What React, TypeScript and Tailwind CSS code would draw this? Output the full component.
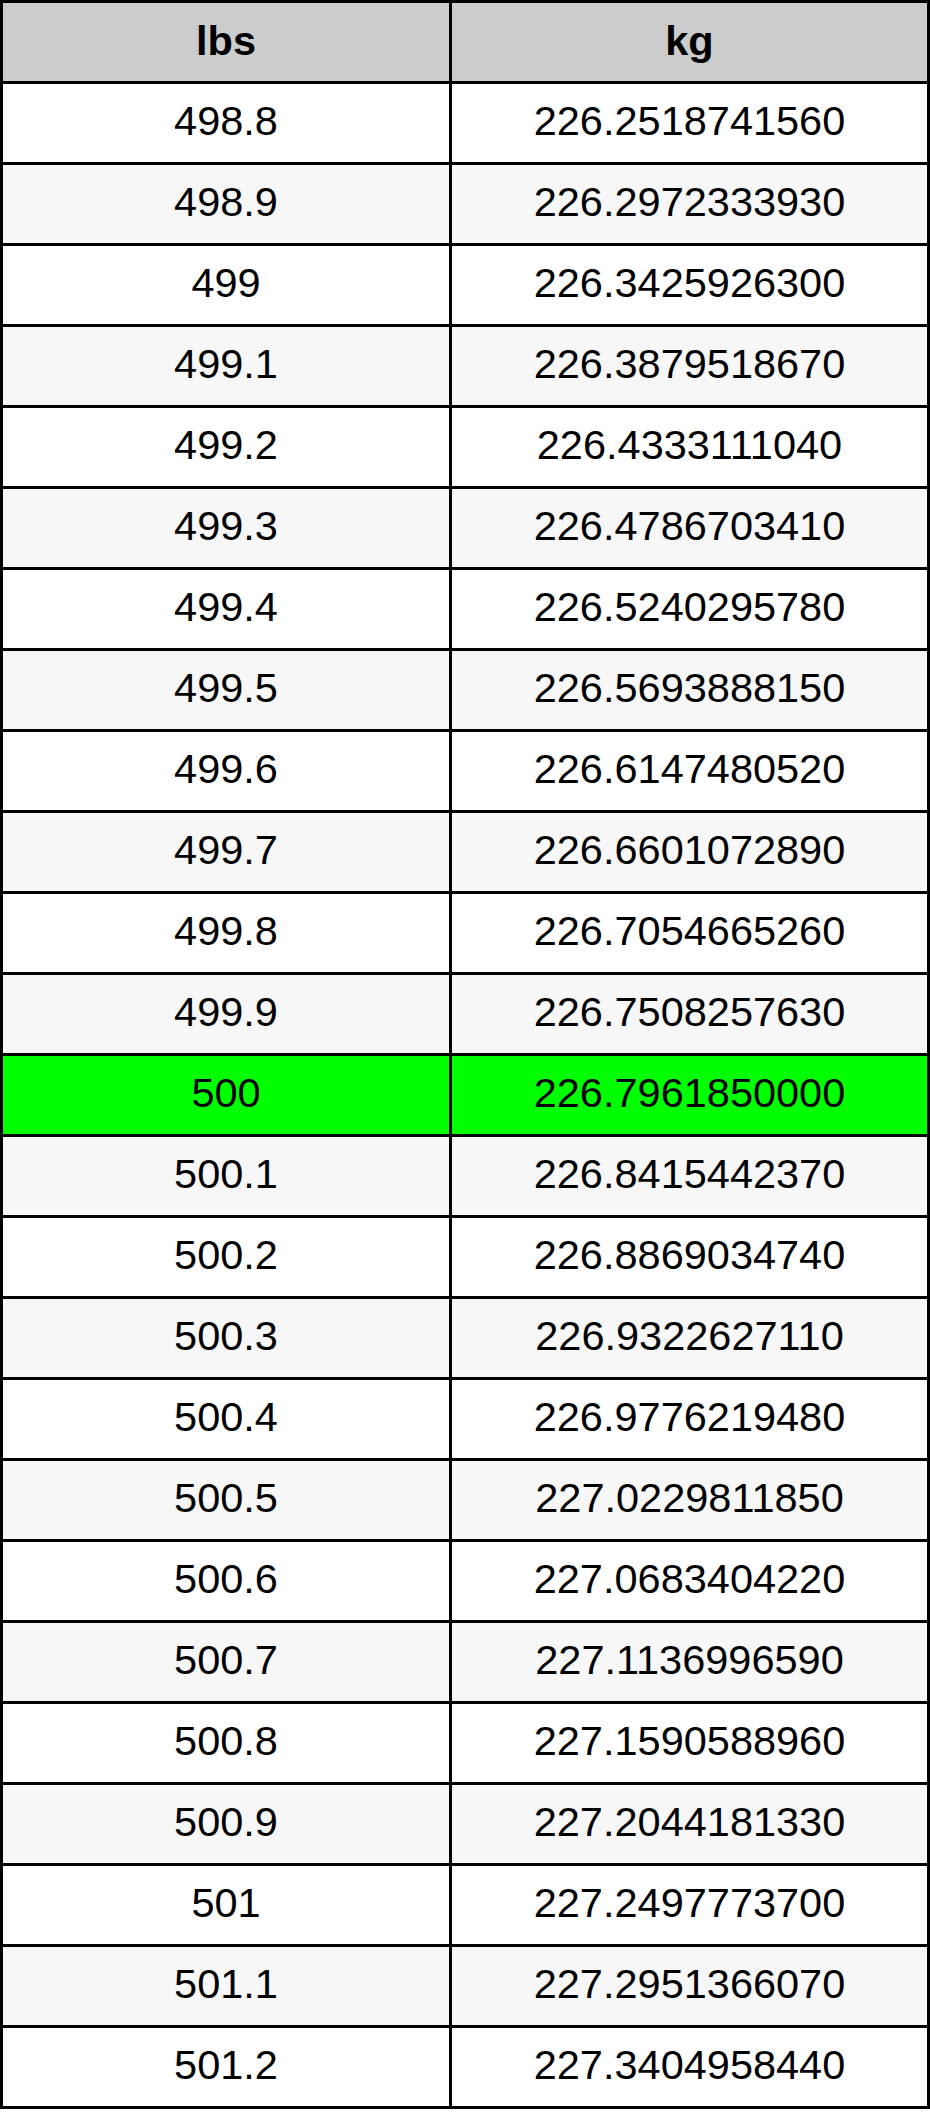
import React from "react";

const rows: [string, string][] = [
  ["498.8", "226.2518741560"],
  ["498.9", "226.2972333930"],
  ["499", "226.3425926300"],
  ["499.1", "226.3879518670"],
  ["499.2", "226.4333111040"],
  ["499.3", "226.4786703410"],
  ["499.4", "226.5240295780"],
  ["499.5", "226.5693888150"],
  ["499.6", "226.6147480520"],
  ["499.7", "226.6601072890"],
  ["499.8", "226.7054665260"],
  ["499.9", "226.7508257630"],
  ["500", "226.7961850000"],
  ["500.1", "226.8415442370"],
  ["500.2", "226.8869034740"],
  ["500.3", "226.9322627110"],
  ["500.4", "226.9776219480"],
  ["500.5", "227.0229811850"],
  ["500.6", "227.0683404220"],
  ["500.7", "227.1136996590"],
  ["500.8", "227.1590588960"],
  ["500.9", "227.2044181330"],
  ["501", "227.2497773700"],
  ["501.1", "227.2951366070"],
  ["501.2", "227.3404958440"],
];

export default function App() {
  return (
    <div className="bg-white w-[930px]" style={{ fontFamily: '"Liberation Sans", Arial, sans-serif' }}>
      <table className="w-[930px] table-fixed border-separate border-spacing-[3px] bg-black text-black text-[41.5px] leading-[1.15]">
        <colgroup>
          <col className="w-[446px]" />
          <col className="w-[475px]" />
        </colgroup>
        <thead>
          <tr>
            <th className="h-[78px] p-0 pb-[3px] bg-[#cccccc] text-center align-middle font-bold">lbs</th>
            <th className="h-[78px] p-0 pb-[3px] bg-[#cccccc] text-center align-middle font-bold">kg</th>
          </tr>
        </thead>
        <tbody>
          {rows.map(([lbs, kg], i) => {
            const bg = lbs === "500" ? "bg-[#00ff00]" : i % 2 === 1 ? "bg-[#f7f7f7]" : "bg-white";
            return (
              <tr key={lbs}>
                <td className={`h-[78px] p-0 pb-[4px] text-center align-middle font-normal ${bg}`}>{lbs}</td>
                <td className={`h-[78px] p-0 pb-[4px] text-center align-middle font-normal ${bg}`}>{kg}</td>
              </tr>
            );
          })}
        </tbody>
      </table>
    </div>
  );
}
